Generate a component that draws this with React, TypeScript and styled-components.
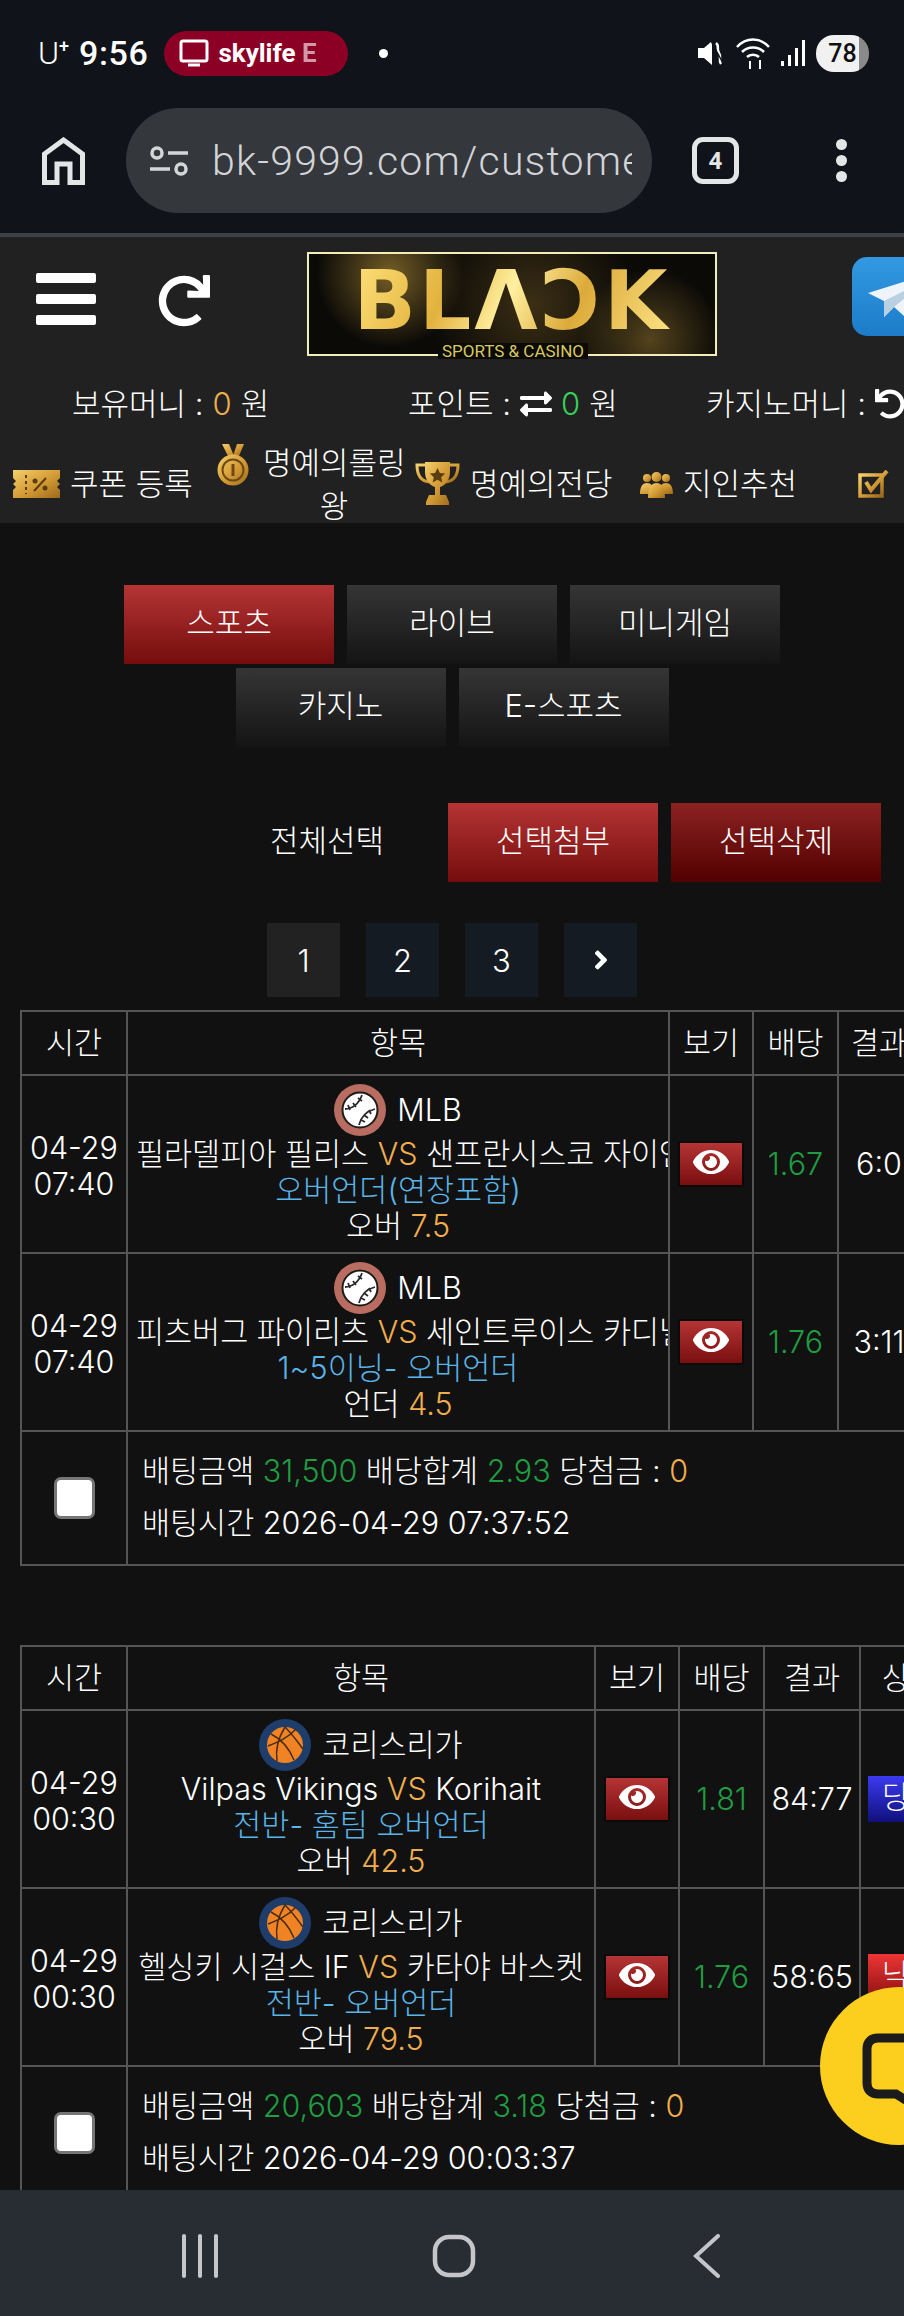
import React from "react";
import styled, { createGlobalStyle } from "styled-components";
import { FaEye, FaRedo, FaUndo, FaExchangeAlt, FaAngleRight } from "react-icons/fa";

const GlobalStyle = createGlobalStyle`
  html, body { margin: 0; padding: 0; background: #111; }
  * { box-sizing: border-box; }
  body { font-family: Inter, "Noto Sans CJK KR", sans-serif; font-weight: 300; color: #fff; }
`;

const Phone = styled.div`
  position: relative;
  width: 904px;
  height: 2316px;
  display: flex;
  flex-direction: column;
  overflow: hidden;
  background: #111;
`;

/* status bar */
const StatusBar = styled.div`
  height: 104px;
  flex: none;
  background: #10141a;
  display: flex;
  align-items: center;
  padding: 2px 35px 0 38px;
  font-family: Roboto, sans-serif;
`;
const Carrier = styled.span`
  font-size: 32px;
  font-weight: 300;
  sup { font-size: 18px; line-height: 0; font-weight: 500; vertical-align: 12px; }
`;
const Clock = styled.span`
  font-size: 34px;
  font-weight: 500;
  margin-left: 10px;
  letter-spacing: 0.6px;
`;
const Pill = styled.div`
  width: 184px;
  height: 45px;
  margin-left: 16px;
  border-radius: 23px;
  background: #8c0026;
  display: flex;
  align-items: center;
  gap: 9px;
  padding-left: 15px;
  font-size: 26px;
  font-weight: 700;
  white-space: nowrap;
  overflow: hidden;
  span { opacity: 0.6; }
`;
const Dot = styled.i`
  width: 9px;
  height: 9px;
  border-radius: 50%;
  background: #fff;
  margin-left: 31px;
`;
const StatusRight = styled.div`
  margin-left: auto;
  display: flex;
  align-items: center;
  gap: 10px;
`;
const Battery = styled.div`
  width: 53px;
  height: 37px;
  border-radius: 18px;
  background: linear-gradient(90deg, #f1f1f1 82%, #8a8a8a 82%);
  color: #111;
  font-size: 25px;
  font-weight: 500;
  display: flex;
  align-items: center;
  justify-content: center;
`;

/* browser bar */
const BrowserBar = styled.div`
  height: 129px;
  flex: none;
  background: #10141a;
  display: flex;
  align-items: flex-start;
  padding: 4px 0 0 42px;
`;
const HomeIcon = styled.svg`
  margin-top: 29px;
  flex: none;
`;
const UrlBox = styled.div`
  width: 526px;
  height: 105px;
  margin-left: 41px;
  border-radius: 53px;
  background: #34373c;
  display: flex;
  align-items: center;
  padding: 0 20px 0 24px;
  gap: 24px;
  overflow: hidden;
  svg { flex: none; }
`;
const UrlText = styled.span`
  font-family: Roboto, sans-serif;
  font-size: 41px;
  font-weight: 300;
  color: #d2d4d7;
  white-space: nowrap;
  overflow: hidden;
  flex: 1;
  letter-spacing: 1.2px;
`;
const TabCount = styled.div`
  width: 47px;
  height: 47px;
  margin: 29px 0 0 40px;
  border: 5px solid #e4e5e7;
  border-radius: 11px;
  font-family: Roboto, sans-serif;
  font-size: 24px;
  font-weight: 700;
  color: #e4e5e7;
  display: flex;
  align-items: center;
  justify-content: center;
`;
const MoreDots = styled.div`
  margin: 31px 0 0 97px;
  display: flex;
  flex-direction: column;
  gap: 5px;
  i { width: 11px; height: 11px; border-radius: 50%; background: #e4e5e7; }
`;
const Separator = styled.div`
  height: 4px;
  flex: none;
  background: #3c4047;
`;

/* site header */
const Site = styled.div`
  flex: 1;
  min-height: 0;
  overflow: hidden;
`;
const Header = styled.header`
  background: #212121;
  height: 286px;
  overflow: hidden;
`;
const TopRow = styled.div`
  height: 141px;
  display: flex;
  align-items: flex-start;
  padding: 15px 0 0 36px;
`;
const Burger = styled.svg`
  width: 60px;
  height: 52px;
  margin-top: 21px;
  flex: none;
`;
const RefreshIcon = styled(FaRedo)`
  width: 52px;
  height: 52px;
  margin: 23px 0 0 62px;
  flex: none;
  color: #fff;
`;
const Logo = styled.div`
  position: relative;
  flex: none;
  width: 410px;
  height: 104px;
  margin-left: 97px;
  border: 2px solid #f3edb8;
  background:
    radial-gradient(circle at 20% 20%, rgba(220, 175, 70, 0.5), transparent 22%),
    radial-gradient(circle at 84% 85%, rgba(220, 175, 70, 0.35), transparent 20%),
    radial-gradient(circle at 55% 50%, rgba(170, 130, 50, 0.3), transparent 45%),
    #0b0a07;
  display: flex;
  justify-content: center;
`;
const LogoMark = styled.span`
  font-family: "DejaVu Sans", sans-serif;
  font-weight: 700;
  font-size: 82px;
  line-height: 94px;
  letter-spacing: 3px;
  background: linear-gradient(115deg, #ffe27a 0%, #e2b23e 30%, #fff0a0 48%, #dcaa3a 68%, #ffe88a 100%);
  -webkit-background-clip: text;
  background-clip: text;
  color: transparent;
`;
const LogoCaption = styled.span`
  position: absolute;
  left: 129px;
  bottom: -5px;
  width: 150px;
  background: #0b0a07;
  text-align: center;
  font-family: Roboto, sans-serif;
  font-size: 17px;
  line-height: 16px;
  font-weight: 400;
  color: #d8c95e;
  white-space: nowrap;
`;
const TelegramButton = styled.div`
  flex: none;
  width: 90px;
  height: 79px;
  margin: 5px 0 0 135px;
  border-radius: 15px;
  background: linear-gradient(180deg, #3299e2, #1c7cc9);
  padding: 14px 0 0 16px;
`;
const BalanceRow = styled.div`
  display: grid;
  grid-template-columns: 336px 298px 300px;
  padding-left: 72px;
  height: 52px;
  font-size: 31px;
  line-height: 52px;
  white-space: nowrap;
`;
const Balance = styled.div`
  display: flex;
  align-items: center;
  gap: 9px;
`;
const Amount = styled.span<{ $tone?: "orange" | "green" }>`
  color: ${(p) => (p.$tone === "green" ? "#35d05a" : "#f0ad4e")};
`;
const NavRow = styled.nav`
  display: flex;
  align-items: center;
  height: 93px;
  margin-top: 7px;
  padding-left: 13px;
  font-size: 31px;
  line-height: 43px;
`;
const NavItem = styled.div<{ $w: number; $wrap?: boolean }>`
  flex: none;
  width: ${(p) => p.$w}px;
  display: flex;
  align-items: ${(p) => (p.$wrap ? "flex-start" : "center")};
  gap: 10px;
  white-space: nowrap;
  text-align: center;
  svg { flex: none; }
`;
const WrapLabel = styled.span`
  width: 142px;
  margin-left: 3px;
`;

/* tabs and toolbar */
const Tabs = styled.div`
  width: 690px;
  margin: 62px auto 0;
  display: flex;
  flex-wrap: wrap;
  justify-content: center;
  gap: 4px 13px;
`;
const Button = styled.div<{ $tone?: "red" | "dark" | "maroon" }>`
  width: 210px;
  height: 79px;
  display: flex;
  align-items: center;
  justify-content: center;
  font-size: 31px;
  padding-bottom: 8px;
  background: ${(p) =>
    p.$tone === "red"
      ? "linear-gradient(180deg, #b53434, #750d0d)"
      : p.$tone === "maroon"
        ? "linear-gradient(180deg, #8c2222, #520000)"
        : "linear-gradient(180deg, #353535, #141414)"};
`;
const Toolbar = styled.div`
  margin-top: 56px;
  padding-right: 23px;
  display: flex;
  justify-content: flex-end;
  align-items: center;
  gap: 13px;
`;
const SelectAll = styled.span`
  font-size: 31px;
  margin-right: 51px;
  padding-bottom: 8px;
`;
const Pagination = styled.div`
  margin-top: 41px;
  display: flex;
  justify-content: center;
  gap: 26px;
`;
const PageLink = styled.div<{ $active?: boolean }>`
  width: 73px;
  height: 74px;
  display: flex;
  align-items: center;
  justify-content: center;
  font-size: 31px;
  background: ${(p) => (p.$active ? "#222" : "#151b22")};
`;

/* tables */
const TableWrap = styled.div<{ $top: number }>`
  margin: ${(p) => p.$top}px 0 0 20px;
`;
const BetTable = styled.table<{ $w: number }>`
  width: ${(p) => p.$w}px;
  table-layout: fixed;
  border-collapse: collapse;
  font-size: 30.5px;
  line-height: 36px;
  th, td {
    border: 2px solid #555;
    text-align: center;
    vertical-align: middle;
    padding: 0;
    overflow: hidden;
    white-space: nowrap;
  }
  th { height: 64px; font-weight: 300; }
`;
const Col = styled.col<{ $w: number }>`
  width: ${(p) => p.$w}px;
`;
const TimeCell = styled.td`
  && { padding-top: 4px; }
`;
const MatchCell = styled.td`
  && { padding: 8px 8px; height: 176px; }
`;
const LeagueLine = styled.div`
  display: flex;
  justify-content: center;
  align-items: center;
  gap: 11px;
  height: 52px;
`;
const VS = styled.span`
  color: #f0ad4e;
`;
const Market = styled.div`
  color: #5ab4e8;
`;
const Line = styled.span`
  color: #f0ad4e;
`;
const Odds = styled.span`
  color: #1f9d40;
`;
const EyeButton = styled.div`
  width: 66px;
  height: 46px;
  margin: 0 auto;
  border: 2px solid #0a0a0a;
  background: linear-gradient(180deg, #b53434, #7a0f0f);
  display: flex;
  align-items: center;
  justify-content: center;
  padding-bottom: 4px;
`;
const Badge = styled.div<{ $tone: "blue" | "red" }>`
  width: 100px;
  height: 46px;
  margin-left: 7px;
  padding-left: 14px;
  text-align: left;
  line-height: 42px;
  background: ${(p) =>
    p.$tone === "blue" ? "linear-gradient(180deg, #3a3af0, #10107c)" : "linear-gradient(180deg, #ee3535, #8a1010)"};
`;
const Check = styled.input`
  appearance: none;
  display: block;
  width: 41px;
  height: 42px;
  margin: 0 auto;
  background: #fff;
  border: 3px solid #767676;
  border-radius: 7px;
`;
const SummaryCell = styled.td`
  && { height: 134px; text-align: left; padding: 0 0 3px 14px; }
  p { margin: 0; }
  p + p { margin-top: 16px; }
`;

/* floating chat + nav bar */
const ChatBubble = styled.div`
  position: absolute;
  left: 820px;
  top: 1987px;
  width: 158px;
  height: 158px;
  border-radius: 50%;
  background: #fccf1e;
  padding: 45px 0 0 42px;
`;
const BottomNav = styled.div`
  height: 126px;
  flex: none;
  background: #282c33;
  display: flex;
  align-items: flex-start;
  padding: 44px 0 0 180px;
`;
const NavGlyph = styled.svg<{ $gap?: number }>`
  height: 44px;
  margin-left: ${(p) => p.$gap || 0}px;
  flex: none;
`;

const Gold = ({ id }: { id: string }) => (
  <defs>
    <linearGradient id={id} x1="0" y1="0" x2="1" y2="1">
      <stop offset="0" stopColor="#f4cf6c" />
      <stop offset="0.55" stopColor="#d39a34" />
      <stop offset="1" stopColor="#9c6a1c" />
    </linearGradient>
  </defs>
);

const TicketIcon = () => (
  <svg width="47" height="28" viewBox="0 0 47 28">
    <Gold id="gt" />
    <path d="M0 0h47v8l-3 3 3 3-3 3 3 3v8H0v-8l3-3-3-3 3-3-3-3z" fill="url(#gt)" />
    <path d="M13 5v3M13 11v3M13 17v3M13 23v1" stroke="#5c3d10" strokeWidth="2" />
    <circle cx="22" cy="11" r="2.5" fill="#5c3d10" />
    <circle cx="32" cy="18" r="2.5" fill="#5c3d10" />
    <path d="M33 8 21 21" stroke="#5c3d10" strokeWidth="2" />
  </svg>
);
const MedalGraphic = styled.svg`
  margin-top: 3px;
`;
const MedalIcon = () => (
  <MedalGraphic width="34" height="42" viewBox="0 0 34 42">
    <Gold id="gm" />
    <path d="M6 0h7l5 12h-6zM28 0h-7l-4 12h6z" fill="url(#gm)" />
    <circle cx="17" cy="26" r="15.5" fill="url(#gm)" />
    <circle cx="17" cy="26" r="10.5" fill="none" stroke="#6e4a12" strokeWidth="2" />
    <path d="M17 20v12" stroke="#6e4a12" strokeWidth="3" />
  </MedalGraphic>
);
const TrophyIcon = () => (
  <svg width="45" height="43" viewBox="0 0 45 43">
    <Gold id="gc" />
    <path d="M11 3H2c0 10 4 16 12 17M34 3h9c0 10-4 16-12 17" fill="none" stroke="url(#gc)" strokeWidth="3" />
    <path d="M10 0h25v10c0 9-6 14-10 15v8h6l3 7v3H11v-3l3-7h6v-8C16 24 10 19 10 10z" fill="url(#gc)" />
    <path d="m22.5 6 2.4 5 5.3.6-4 3.6 1.1 5.3-4.8-2.7-4.8 2.7 1.1-5.3-4-3.6 5.3-.6z" fill="#5c3d10" />
  </svg>
);
const FriendsIcon = () => (
  <svg width="33" height="28" viewBox="0 0 33 28">
    <Gold id="gf" />
    <circle cx="7" cy="8" r="4" fill="url(#gf)" />
    <circle cx="26" cy="8" r="4" fill="url(#gf)" />
    <path d="M0 24c0-8 3-11 7-11s7 3 7 11zM19 24c0-8 3-11 7-11s7 3 7 11z" fill="url(#gf)" />
    <circle cx="16.5" cy="7" r="5" fill="url(#gf)" />
    <path d="M8 28c0-11 4-15 8.500-15S25 17 25 28z" fill="url(#gf)" />
  </svg>
);
const CheckIcon = () => (
  <svg width="35" height="28" viewBox="0 0 35 28">
    <Gold id="gk" />
    <path d="M2 5h22v21H2z" fill="none" stroke="url(#gk)" strokeWidth="3.500" />
    <path d="m8 12 5 8L29 1" fill="none" stroke="url(#gk)" strokeWidth="4" />
  </svg>
);

const BaseballIcon = () => (
  <svg width="52" height="52" viewBox="0 0 52 52">
    <circle cx="26" cy="26" r="26" fill="#b96d61" />
    <circle cx="26" cy="26" r="17.500" fill="#fff" stroke="#1c1c1c" strokeWidth="2" />
    <path d="M11 25c7 0 14-5 17-14M25 41c2-8 8-14 16-16" fill="none" stroke="#2a2a2a" strokeWidth="1.800" />
    <path d="M14 21l2 5M19 19l3 4M24 14l4 3M27 36l4 2M30 31l4 3M35 26l2 4" fill="none" stroke="#2a2a2a" strokeWidth="1.800" />
  </svg>
);
const BasketballIcon = () => (
  <svg width="52" height="52" viewBox="0 0 52 52">
    <circle cx="26" cy="26" r="26" fill="#1f3d6b" />
    <circle cx="26" cy="26" r="18" fill="#f08324" />
    <path d="M12 15c10 5 18 14 23 26M26 8c-5 8-10 20-8 34M9 27c10-4 20-8 28-17M26 8c8 8 15 18 18 22" fill="none" stroke="#4a2a10" strokeWidth="1.500" />
  </svg>
);

type Match = {
  date: string;
  time: string;
  sport: "baseball" | "basketball";
  league: string;
  home: string;
  away: string;
  market: string;
  pick: string;
  line: string;
  odds: string;
  score: string;
  result: { label: string; tone: "blue" | "red" };
};

type Slip = {
  width: number;
  cols: number[];
  top: number;
  amount: string;
  total: string;
  placed: string;
  matches: Match[];
};

const slips: Slip[] = [
  {
    width: 1000,
    cols: [106, 542, 84, 85, 82, 101],
    top: 13,
    amount: "31,500",
    total: "2.93",
    placed: "2026-04-29 07:37:52",
    matches: [
      {
        date: "04-29", time: "07:40", sport: "baseball", league: "MLB",
        home: "필라델피아 필리스", away: "샌프란시스코 자이언츠",
        market: "오버언더(연장포함)", pick: "오버", line: "7.5", odds: "1.67", score: "6:0",
        result: { label: "낙첨", tone: "red" },
      },
      {
        date: "04-29", time: "07:40", sport: "baseball", league: "MLB",
        home: "피츠버그 파이리츠", away: "세인트루이스 카디널스",
        market: "1~5이닝- 오버언더", pick: "언더", line: "4.5", odds: "1.76", score: "3:11",
        result: { label: "당첨", tone: "blue" },
      },
    ],
  },
  {
    width: 939,
    cols: [106, 468, 84, 85, 96, 100],
    top: 79,
    amount: "20,603",
    total: "3.18",
    placed: "2026-04-29 00:03:37",
    matches: [
      {
        date: "04-29", time: "00:30", sport: "basketball", league: "코리스리가",
        home: "Vilpas Vikings", away: "Korihait",
        market: "전반- 홈팀 오버언더", pick: "오버", line: "42.5", odds: "1.81", score: "84:77",
        result: { label: "당첨", tone: "blue" },
      },
      {
        date: "04-29", time: "00:30", sport: "basketball", league: "코리스리가",
        home: "헬싱키 시걸스 IF", away: "카타야 바스켓",
        market: "전반- 오버언더", pick: "오버", line: "79.5", odds: "1.76", score: "58:65",
        result: { label: "낙첨", tone: "red" },
      },
    ],
  },
];

const SlipTable = ({ slip }: { slip: Slip }) => (
  <TableWrap $top={slip.top}>
    <BetTable $w={slip.width}>
      <colgroup>
        {slip.cols.map((w, i) => (
          <Col key={i} $w={w} />
        ))}
      </colgroup>
      <thead>
        <tr>
          <th>시간</th>
          <th>항목</th>
          <th>보기</th>
          <th>배당</th>
          <th>결과</th>
          <th>상태</th>
        </tr>
      </thead>
      <tbody>
        {slip.matches.map((m, i) => (
          <tr key={i}>
            <TimeCell>
              {m.date}
              <br />
              {m.time}
            </TimeCell>
            <MatchCell>
              <LeagueLine>
                {m.sport === "baseball" ? <BaseballIcon /> : <BasketballIcon />}
                {m.league}
              </LeagueLine>
              <div>
                {m.home} <VS>VS</VS> {m.away}
              </div>
              <Market>{m.market}</Market>
              <div>
                {m.pick} <Line>{m.line}</Line>
              </div>
            </MatchCell>
            <td>
              <EyeButton>
                <FaEye size={36} color="#fff" />
              </EyeButton>
            </td>
            <td>
              <Odds>{m.odds}</Odds>
            </td>
            <td>{m.score}</td>
            <td>
              <Badge $tone={m.result.tone}>{m.result.label}</Badge>
            </td>
          </tr>
        ))}
        <tr>
          <td>
            <Check type="checkbox" readOnly />
          </td>
          <SummaryCell colSpan={5}>
            <p>
              배팅금액 <Odds>{slip.amount}</Odds> 배당합계 <Odds>{slip.total}</Odds> 당첨금 : <Line>0</Line>
            </p>
            <p>배팅시간 {slip.placed}</p>
          </SummaryCell>
        </tr>
      </tbody>
    </BetTable>
  </TableWrap>
);

export default function App() {
  return (
    <Phone>
      <GlobalStyle />
      <StatusBar>
        <Carrier>
          U<sup>+</sup>
        </Carrier>
        <Clock>9:56</Clock>
        <Pill>
          <svg width="30" height="30" viewBox="0 0 30 30" fill="none" stroke="#fff" strokeWidth="3">
            <rect x="2" y="3" width="26" height="20" rx="2" />
            <path d="M9 27h12" />
          </svg>
          <div>
            skylife <span>E</span>
          </div>
        </Pill>
        <Dot />
        <StatusRight>
          <svg width="28" height="26" viewBox="0 0 28 26">
            <path d="M0 8h6l8-7v24l-8-7H0z" fill="#fff" />
            <path d="M18 3c4 3 0 6 3 10s-1 7 2 11" fill="none" stroke="#fff" strokeWidth="2.500" />
            <path d="M13 1l13 24" stroke="#10141a" strokeWidth="1.500" />
          </svg>
          <svg width="34" height="34" viewBox="0 0 34 34" fill="none" stroke="#fff" strokeWidth="2.500">
            <path d="M1 11c9-10 23-10 32 0M6 16c6-6 16-6 22 0M11 21c3-3 9-3 12 0" />
            <path d="M14 25v8M24 33v-9" strokeWidth="2" />
          </svg>
          <svg width="26" height="28" viewBox="0 0 26 28" fill="#fff">
            <rect x="1" y="22" width="3" height="5" />
            <rect x="8" y="16" width="3" height="11" />
            <rect x="15" y="9" width="3" height="18" />
            <rect x="22" y="1" width="3" height="26" />
          </svg>
          <Battery>78</Battery>
        </StatusRight>
      </StatusBar>

      <BrowserBar>
        <HomeIcon width="43" height="48" viewBox="0 0 43 48" fill="none" stroke="#e4e5e7" strokeWidth="5">
          <path d="M2.500 45.500V17L21.500 3l19 14v28.500H28V27H15v18.500z" />
        </HomeIcon>
        <UrlBox>
          <svg width="38" height="30" viewBox="0 0 38 30" fill="none" stroke="#d5d6d8" strokeWidth="3.500">
            <circle cx="7" cy="7" r="5" />
            <path d="M18 7h20M0 23h20" />
            <circle cx="31" cy="23" r="5" />
          </svg>
          <UrlText>bk-9999.com/custome</UrlText>
        </UrlBox>
        <TabCount>4</TabCount>
        <MoreDots>
          <i />
          <i />
          <i />
        </MoreDots>
      </BrowserBar>
      <Separator />

      <Site>
        <Header>
          <TopRow>
            <Burger viewBox="0 0 60 52" fill="#fff">
              <rect width="60" height="10" rx="2" />
              <rect y="21" width="60" height="10" rx="2" />
              <rect y="42" width="60" height="10" rx="2" />
            </Burger>
            <RefreshIcon />
            <Logo>
              <LogoMark>BLΛƆK</LogoMark>
              <LogoCaption>SPORTS &amp; CASINO</LogoCaption>
            </Logo>
            <TelegramButton>
              <svg width="70" height="52" viewBox="0 0 70 52">
                <path d="M0 22 70 0 44 52 26 36 16 46V30z" fill="#eef4fa" />
                <path d="M16 30 60 8 26 36l-10 10z" fill="#b9cfe2" />
              </svg>
            </TelegramButton>
          </TopRow>
          <BalanceRow>
            <Balance>
              보유머니 : <Amount>0</Amount> 원
            </Balance>
            <Balance>
              포인트 : <FaExchangeAlt size={32} /> <Amount $tone="green">0</Amount> 원
            </Balance>
            <Balance>
              카지노머니 : <FaUndo size={30} />
            </Balance>
          </BalanceRow>
          <NavRow>
            <NavItem $w={203}>
              <TicketIcon />
              쿠폰 등록
            </NavItem>
            <NavItem $w={199} $wrap>
              <MedalIcon />
              <WrapLabel>
                명예의롤링
                <br />왕
              </WrapLabel>
            </NavItem>
            <NavItem $w={225}>
              <TrophyIcon />
              명예의전당
            </NavItem>
            <NavItem $w={218}>
              <FriendsIcon />
              지인추천
            </NavItem>
            <NavItem $w={120}>
              <CheckIcon />
              출석체크
            </NavItem>
          </NavRow>
        </Header>

        <Tabs>
          <Button $tone="red">스포츠</Button>
          <Button>라이브</Button>
          <Button>미니게임</Button>
          <Button>카지노</Button>
          <Button>E-스포츠</Button>
        </Tabs>

        <Toolbar>
          <SelectAll>전체선택</SelectAll>
          <Button $tone="red">선택첨부</Button>
          <Button $tone="maroon">선택삭제</Button>
        </Toolbar>

        <Pagination>
          <PageLink $active>1</PageLink>
          <PageLink>2</PageLink>
          <PageLink>3</PageLink>
          <PageLink>
            <FaAngleRight size={30} />
          </PageLink>
        </Pagination>

        {slips.map((s) => (
          <SlipTable key={s.placed} slip={s} />
        ))}
      </Site>

      <BottomNav>
        <NavGlyph width="40" viewBox="0 0 40 44" stroke="#c4c6c9" strokeWidth="4" fill="none">
          <path d="M4 2v40M20 2v40M36 2v40" strokeLinecap="round" />
        </NavGlyph>
        <NavGlyph width="44" $gap={212} viewBox="0 0 44 44" stroke="#c4c6c9" strokeWidth="4.500" fill="none">
          <rect x="3" y="3" width="38" height="38" rx="14" />
        </NavGlyph>
        <NavGlyph width="28" $gap={217} viewBox="0 0 28 44" stroke="#c4c6c9" strokeWidth="4" fill="none">
          <path d="M25 2 3 22l22 20" strokeLinecap="round" />
        </NavGlyph>
      </BottomNav>

      <ChatBubble>
        <svg width="80" height="80" viewBox="0 0 80 80" fill="none" stroke="#1b1b1b" strokeWidth="9">
          <path d="M60 6H16C9 6 5 10 5 17v34c0 7 4 11 11 11h18l16 10V62h30" />
        </svg>
      </ChatBubble>
    </Phone>
  );
}
